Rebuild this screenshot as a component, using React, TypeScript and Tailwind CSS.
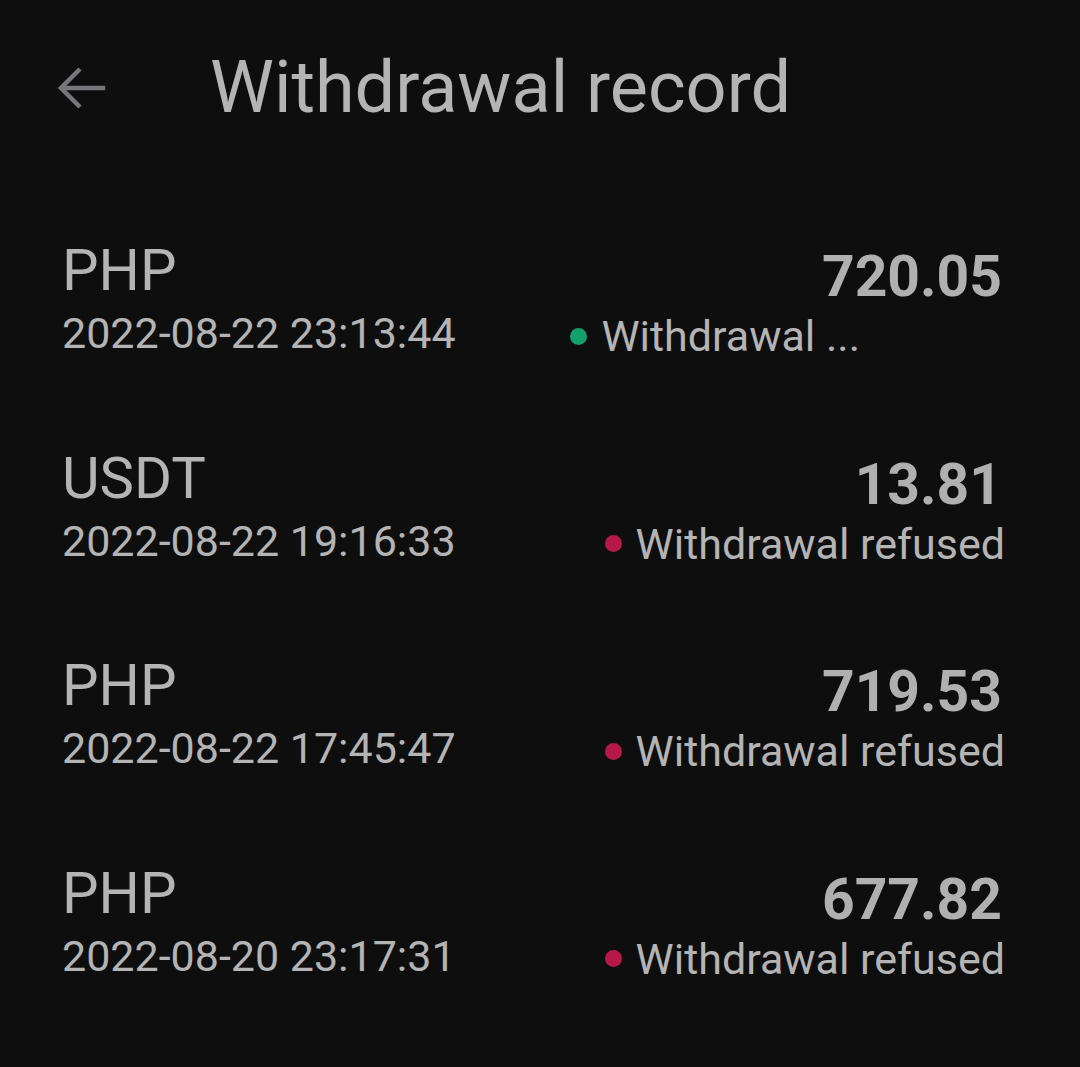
import React from "react";

const rows = [
  { cur: "PHP", date: "2022-08-22 23:13:44", amt: "720.05", status: "Withdrawal ...", ok: true },
  { cur: "USDT", date: "2022-08-22 19:16:33", amt: "13.81", status: "Withdrawal refused", ok: false },
  { cur: "PHP", date: "2022-08-22 17:45:47", amt: "719.53", status: "Withdrawal refused", ok: false },
  { cur: "PHP", date: "2022-08-20 23:17:31", amt: "677.82", status: "Withdrawal refused", ok: false },
];

export default function App() {
  return (
    <div className="w-[1080px] h-[1067px] bg-[#0e0e0f] text-[#b3b3b3] overflow-hidden" style={{ fontFamily: "Roboto, 'Noto Sans', sans-serif" }}>
      <div className="flex items-center h-[176px]">
        <div className="w-[210px] flex items-center pl-[56px] h-full">
          <svg width="50" height="46" viewBox="0 0 50 46" fill="none" stroke="#76767c" strokeWidth="4.5" strokeLinecap="square">
            <path d="M47 23H7" />
            <path d="M24 4L5 23L24 42" strokeLinecap="butt" />
          </svg>
        </div>
        <div className="text-[72px] leading-none font-normal text-[#b4b4b4]">Withdrawal record</div>
      </div>
      <div className="flex flex-col pt-[62px]">
        {rows.map((r, i) => (
          <div key={i} className="flex justify-between items-start h-[207.5px] pl-[62px] pr-[78px]">
            <div className="flex flex-col">
              <div className="text-[58px] leading-[64px] text-[#b4b4b4]">{r.cur}</div>
              <div className="text-[43px] leading-[56px] mt-[3px] text-[#b4b4b4]">{r.date}</div>
            </div>
            <div className="flex flex-col items-end mt-[8px]">
              <div className="text-[57px] leading-[62px] font-bold text-[#b0b0b0]">{r.amt}</div>
              <div className="flex items-center text-[43px] leading-[56px] mr-[-3px] text-[#b4b4b4]">
                <span className={`inline-block w-[17px] h-[17px] rounded-full mr-[14px] ${r.ok ? "bg-[#12a06b]" : "bg-[#b8174a]"}`} />
                <span className={r.ok ? "mr-[145px]" : ""}>{r.status}</span>
              </div>
            </div>
          </div>
        ))}
      </div>
    </div>
  );
}
